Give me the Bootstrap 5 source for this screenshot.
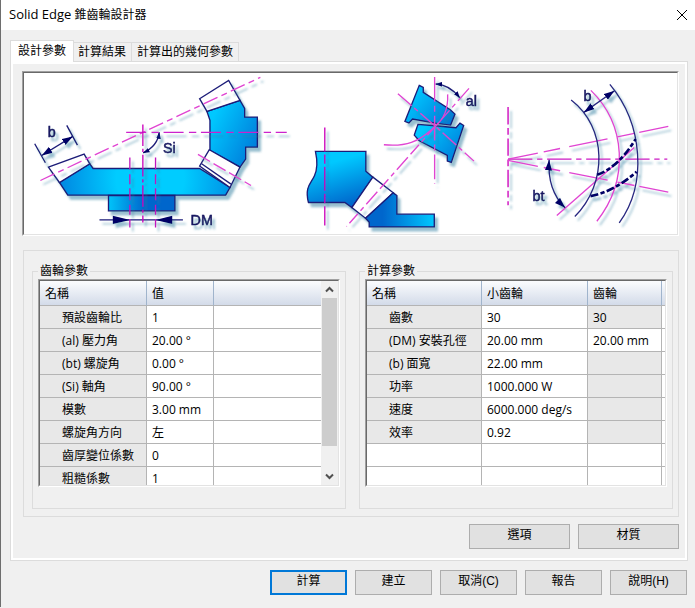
<!DOCTYPE html>
<html lang="zh-Hant">
<head>
<meta charset="utf-8">
<meta name="viewport" content="width=device-width, initial-scale=1">
<title>Solid Edge 錐齒輪設計器</title>
<link href="https://cdn.jsdelivr.net/npm/bootstrap@5.3.0/dist/css/bootstrap.min.css" rel="stylesheet">
<style>
body{background:#f0f0f0;color:#000;font:12px/16px "Open Sans","Noto Sans CJK TC",sans-serif;border-left:1px solid #6e6e6e;min-width:640px}
.titlebar{height:30px;padding:0 6px 1px 8px}
.app-name{font-size:13px}
.close-btn{width:14px;height:14px}
.dlg{padding:10px 7px 0 9px}
.tabs .tab-btn{border:1px solid #dcdcdc;border-bottom:0;background:#f0f0f0;height:19px;padding:0 5px;line-height:18px;border-left:0;color:#000}
.tabs .tab-btn.active{background:#fff;height:22px;padding:0 7px 2px;border-left:1px solid #dcdcdc;margin-bottom:-1px;position:relative}
.tabs .tab-btn:nth-child(2){padding:0 5px 0 4px}
.pane{border:1px solid #dcdcdc;box-shadow:inset 2px 2px #fff,inset -2px -2px #fff;padding:9px 8px 11px 11px}
.sunken{border:1px solid;border-color:#a0a0a0 #fff #fff #a0a0a0;background:#fff}
.sunken-in{border:1px solid;border-color:#696969 #e3e3e3 #e3e3e3 #696969}
.outer-group{border:1px solid #dcdcdc;margin:14px 0 0 1px;padding:12px 5px 7px 8px}
.param-group{gap:13px}
.param-set{border:1px solid #dcdcdc;padding:0 5px 21px}
.param-set legend{font-size:12px;line-height:16px;margin:-8px 0 0;padding:0 2px;width:auto;background:#f0f0f0}
.grid-view{height:206px;overflow:hidden}
.prop{table-layout:fixed;width:100%;border-collapse:separate;border-spacing:0;white-space:nowrap;line-height:14px}
.prop th,.prop td{height:23px;padding:1px 0 0 5px;border-right:1px solid #b4b4b4;border-bottom:1px solid #b4b4b4;font-weight:400;overflow:hidden}
.prop thead th{height:25px;background:linear-gradient(#fbfcfe,#d3dbe9);border-right-color:#a0b4cc}
.prop tbody th{background:#e8e8e8;padding-left:22px}
.prop .off{background:#e8e8e8}
.prop th:last-child,.prop td:last-child{border-right:0}
.c-a{width:107px}.c-b{width:67px}.c-c{width:115px}.c-d{width:106px}.c-e{width:74px}
.vbar{width:17px;background:#f0f0f0;padding:0 1px}
.vbar .arrow{height:17px}
.vbar .thumb{background:#cdcdcd;height:148px}
.cmd{background:#e1e1e1;border:1px solid #adadad;height:25px;padding:0 0 4px;width:77px;font:12px/16px "Liberation Sans","Noto Sans CJK TC",sans-serif;color:#000}
.cmd.wide{width:101px}
.cmd.main{border:2px solid #0078d7}
.gap8{gap:8px}
.lower{margin-top:7px}
.footer-row{padding:9px 1px 12px 0}
</style>
<script src="https://cdn.jsdelivr.net/npm/bootstrap@5.3.0/dist/js/bootstrap.bundle.min.js"></script>
</head>
<body>
<header class="titlebar bg-white d-flex align-items-center justify-content-between">
  <span><span class="app-name">Solid Edge</span> 錐齒輪設計器</span>
  <button type="button" class="close-btn border-0 bg-transparent p-0 d-flex" aria-label="關閉"><svg width="14" height="14" viewBox="0 0 14 14"><path d="M2 2l10 10M12 2L2 12" stroke="#000" fill="none"/></svg></button>
</header>
<main class="dlg">
  <div class="tabs d-flex align-items-end" role="tablist">
    <button type="button" class="tab-btn active" role="tab" aria-selected="true">設計參數</button>
    <button type="button" class="tab-btn" role="tab" aria-selected="false">計算結果</button>
    <button type="button" class="tab-btn" role="tab" aria-selected="false">計算出的幾何參數</button>
  </div>
  <section class="pane" role="tabpanel">
    <div class="sunken"><div class="sunken-in">
      <svg class="d-block w-100" viewBox="24 73 652 161" role="img" aria-label="錐齒輪參數圖">
        <defs>
          <filter id="sh" filterUnits="userSpaceOnUse" x="-20" y="-20" width="2100" height="560"><feDropShadow dx="9" dy="12" stdDeviation="3.5" flood-color="#2f7fa0" flood-opacity=".5"/></filter>
          <radialGradient id="g1" gradientUnits="userSpaceOnUse" cx="390" cy="340" r="290"><stop offset=".35" stop-color="#00ccff"/><stop offset="1" stop-color="#0080de"/></radialGradient>
          <linearGradient id="g2"><stop offset="0" stop-color="#00c4fa"/><stop offset=".55" stop-color="#0066cc"/></linearGradient>
          <linearGradient id="g3" x1="0" y1=".1" x2="1" y2=".75"><stop offset=".15" stop-color="#00c8ff"/><stop offset="1" stop-color="#007bd9"/></linearGradient>
          <linearGradient id="g4" x1=".3" y1="0" x2=".65" y2="1"><stop offset=".2" stop-color="#00c8ff"/><stop offset="1" stop-color="#0060c8"/></linearGradient>
          <linearGradient id="g5"><stop offset=".25" stop-color="#0066cc"/><stop offset="1" stop-color="#00c8ff"/></linearGradient>
          <marker id="ar" viewBox="0 0 30 20" refX="30" refY="10" markerWidth="32" markerHeight="22" markerUnits="userSpaceOnUse" orient="auto-start-reverse"><path d="M0 0L30 10L0 20z" fill="#000066"/></marker>
          <marker id="as" viewBox="0 0 20 14" refX="19" refY="7" markerWidth="20" markerHeight="15" markerUnits="userSpaceOnUse" orient="auto-start-reverse"><path d="M0 0L20 7L0 14z" fill="#000066"/></marker>
        </defs>
        <g font-family="Liberation Sans, sans-serif" font-size="43" fill="none" stroke-width="4">
          <!-- gear pair section -->
          <g transform="translate(20 65) scale(.33333)">
            <g filter="url(#sh)" stroke="#1c1c78">
              <path fill="url(#g1)" d="M118 352L209 296L219 310H538L629 367L616 390H143Z"/>
              <path fill="#fff" d="M85 306L192 267L209 296L118 352Z"/>
              <path fill="url(#g2)" d="M265 391H464V437H265Z"/>
              <path fill="url(#g3)" d="M560 139L659 106L673 130V156H711V246H676V282L659 306L569 256V166Z"/>
              <path fill="#fff" d="M538 101L625 46L659 106L560 139Z"/>
              <path fill="#fff" d="M567 254L659 306L629 367L538 303Z"/><path d="M544 296L632 357"/>
              <path d="M44 236L76 293M140 181L172 240"/>
              <path d="M65 271L158 214" marker-start="url(#ar)" marker-end="url(#ar)"/>
              <path d="M417 202Q412 244 369 263" marker-start="url(#as)" marker-end="url(#as)"/>
              <path d="M238 464H488"/>
              <path d="M278 452L330 464L278 476ZM456 452L406 464L456 476Z" fill="#000066" stroke="none"/>
            </g>
            <g filter="url(#sh)" stroke="#e044d2">
              <path d="M61 346L720 37" stroke-dasharray="46 13 18 13"/>
              <path d="M533 268L692 361" stroke-dasharray="42 12"/>
              <path d="M318 202H799" stroke="#cc22cc" stroke-dasharray="60 16 22 14"/>
              <path d="M368 178V472" stroke="#cc00bb" stroke-dasharray="65 8 10 8"/>
              <path d="M329 277V487M406 277V487" stroke="#c018bd" stroke-dasharray="36 14 30 12"/>
            </g>
            <g filter="url(#sh)" fill="#161660" stroke="#161660" stroke-width="1.5"><text x="83" y="217">b</text><text x="428" y="263">Si</text><text x="511" y="480">DM</text></g>
          </g>
          <!-- pressure angle -->
          <g transform="translate(290 65) scale(.33333)">
            <g filter="url(#sh)" stroke="#1c1c78">
              <path fill="url(#g4)" d="M75 259H226V318L247 336L184 427L163 412H54C42 365 62 355 72 332C84 306 80 282 75 259Z"/>
              <path fill="#fff" d="M247 336L308 383L225 459L184 427Z"/>
              <path fill="url(#g5)" d="M308 383L319 391V447H431V485H236V471L225 459Z"/>
              <path fill="url(#g3)" d="M386 61L398 67V82L479 134L493 147L480 180L438 175L366 162L355 174L343 169Z"/>
              <path fill="url(#g3)" d="M382 178L434 182L496 188L508 174L519 181L482 292L470 288V271L386 227L371 210Z"/>
              <path d="M435 57Q477 59 507 98" marker-start="url(#as)" marker-end="url(#as)"/>
            </g>
            <g filter="url(#sh)" stroke="#e044d2">
              <path d="M103 187V481" stroke="#cc00bb" stroke-dasharray="72 9 28 9"/>
              <path d="M432 36V356" stroke-dasharray="74 12 18 12"/>
              <path d="M535 70L168 484" stroke-dasharray="50 12 14 12 38 12"/>
              <path d="M322 86L436 185L550 288" stroke-dasharray="55 10 14 10"/>
              <path d="M471 88Q474 151 433 184C384 232 345 245 280 239"/>
            </g>
            <g filter="url(#sh)" fill="#161660" stroke="#161660" stroke-width="1.5"><text x="525" y="124">al</text></g>
          </g>
          <!-- spiral angle -->
          <g transform="translate(480 65) scale(.33333)" filter="url(#sh)">
            <g stroke="#e044d2">
              <path d="M82 126V420" stroke="#cc00bb" stroke-dasharray="52 11 20 11"/>
              <path d="M82 282H559" stroke="#cc18c4" stroke-dasharray="73 14 16 14"/>
              <path d="M82 282L562 184" stroke-dasharray="91 18 50 28 117 30 52 15"/>
              <path d="M82 286L562 381" stroke-dasharray="91 18 50 28 117 30 52 15"/>
              <path d="M330 76C435 178 446 344 348 468"/><path d="M228 451L460 247"/>
            </g>
            <g stroke="#282880">
              <path d="M271 105C378 187 382 353 282 454M387 58C487 178 499 357 415 473"/>
              <path d="M309 142L401 77" marker-start="url(#ar)" marker-end="url(#ar)"/>
              <path d="M205 284Q199 375 253 428" marker-start="url(#ar)" marker-end="url(#ar)"/>
              <path d="M349 329Q413 306 464 222M329 393Q398 380 467 320" stroke="#000066" stroke-width="8" stroke-dasharray="24 7 13 7"/>
            </g>
            <g fill="#161660" stroke="#161660" stroke-width="1.5"><text x="308" y="107">b</text><text x="155" y="406">bt</text></g>
          </g>
        </g>
      </svg>
    </div></div>
    <div class="outer-group">
      <div class="param-group d-flex">
        <fieldset class="param-set flex-fill w-50">
          <legend class="float-none">齒輪參數</legend>
          <div class="sunken"><div class="sunken-in grid-view d-flex">
            <div class="flex-grow-1">
            <table class="prop">
              <colgroup><col class="c-a"><col class="c-b"><col></colgroup>
              <thead><tr><th scope="col">名稱</th><th scope="col">值</th><th></th></tr></thead>
              <tbody>
                <tr><th scope="row">預設齒輪比</th><td>1</td><td></td></tr>
                <tr><th scope="row">(al) 壓力角</th><td>20.00 °</td><td></td></tr>
                <tr><th scope="row">(bt) 螺旋角</th><td>0.00 °</td><td></td></tr>
                <tr><th scope="row">(Si) 軸角</th><td>90.00 °</td><td></td></tr>
                <tr><th scope="row">模數</th><td>3.00 mm</td><td></td></tr>
                <tr><th scope="row">螺旋角方向</th><td>左</td><td></td></tr>
                <tr><th scope="row">齒厚變位係數</th><td>0</td><td></td></tr>
                <tr><th scope="row">粗糙係數</th><td>1</td><td></td></tr>
              </tbody>
            </table>
            </div>
            <div class="vbar d-flex flex-column flex-shrink-0">
              <button type="button" class="arrow border-0 bg-transparent p-0 d-flex align-items-center justify-content-center" aria-label="向上捲動"><svg width="9" height="7" viewBox="0 0 9 7"><path d="M1 5.500L4.500 2L8 5.500" stroke="#505050" stroke-width="2" fill="none"/></svg></button>
              <div class="thumb"></div>
              <button type="button" class="arrow mt-auto border-0 bg-transparent p-0 d-flex align-items-center justify-content-center" aria-label="向下捲動"><svg width="9" height="7" viewBox="0 0 9 7"><path d="M1 1.500L4.500 5L8 1.500" stroke="#505050" stroke-width="2" fill="none"/></svg></button>
            </div>
          </div></div>
        </fieldset>
        <fieldset class="param-set flex-fill w-50">
          <legend class="float-none">計算參數</legend>
          <div class="sunken"><div class="sunken-in grid-view">
            <table class="prop">
              <colgroup><col class="c-c"><col class="c-d"><col class="c-e"><col></colgroup>
              <thead><tr><th scope="col">名稱</th><th scope="col">小齒輪</th><th scope="col">齒輪</th><th></th></tr></thead>
              <tbody>
                <tr><th scope="row">齒數</th><td>30</td><td class="off">30</td><td></td></tr>
                <tr><th scope="row">(DM) 安裝孔徑</th><td>20.00 mm</td><td>20.00 mm</td><td></td></tr>
                <tr><th scope="row">(b) 面寬</th><td>22.00 mm</td><td class="off"></td><td></td></tr>
                <tr><th scope="row">功率</th><td>1000.000 W</td><td class="off"></td><td></td></tr>
                <tr><th scope="row">速度</th><td>6000.000 deg/s</td><td class="off"></td><td></td></tr>
                <tr><th scope="row">效率</th><td>0.92</td><td class="off"></td><td></td></tr>
                <tr><td></td><td></td><td></td><td></td></tr>
                <tr><td></td><td></td><td></td><td></td></tr>
              </tbody>
            </table>
          </div></div>
        </fieldset>
      </div>
    </div>
    <div class="lower gap8 d-flex justify-content-end">
      <button type="button" class="cmd wide">選項</button>
      <button type="button" class="cmd wide">材質</button>
    </div>
  </section>
  <div class="footer-row gap8 d-flex justify-content-end">
    <button type="submit" class="cmd main">計算</button>
    <button type="button" class="cmd">建立</button>
    <button type="button" class="cmd">取消(C)</button>
    <button type="button" class="cmd">報告</button>
    <button type="button" class="cmd">說明(H)</button>
  </div>
</main>
</body>
</html>
